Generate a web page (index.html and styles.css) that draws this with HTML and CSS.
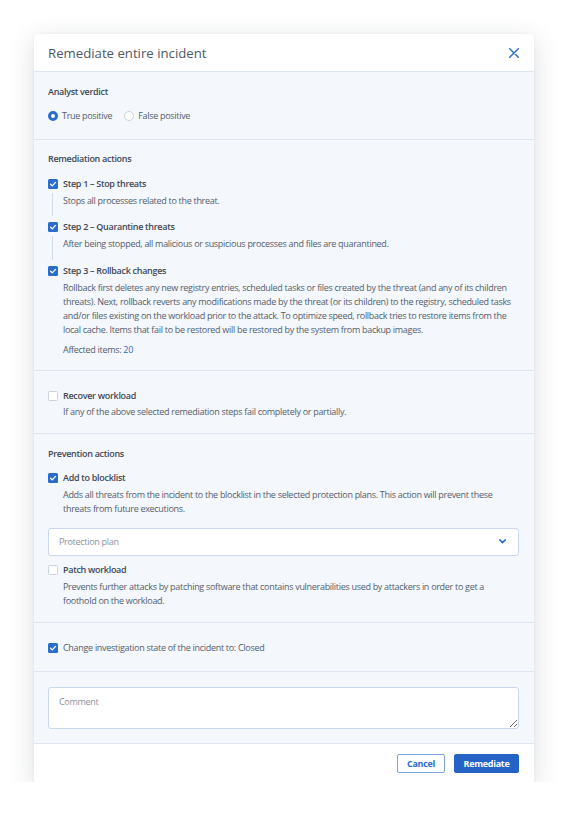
FILE: index.html
```html
<!DOCTYPE html>
<html lang="en">
<head>
<meta charset="utf-8">
<title>Remediate entire incident</title>
<link rel="stylesheet" href="styles.css">
</head>
<body>
<div class="dialog">
  <header class="dlg-head">
    <h1 class="dlg-title">Remediate entire incident</h1>
    <svg class="close" width="10" height="10" viewBox="0 0 10 10"><path d="M0.7 0.7 L9.3 9.3 M9.3 0.7 L0.7 9.3" stroke="#2a6ccb" stroke-width="1.4" fill="none" stroke-linecap="round"/></svg>
  </header>

  <section class="sec sec-verdict">
    <div class="sec-title">Analyst verdict</div>
    <div class="radios">
      <label class="radio"><span class="rdot on"></span><span>True positive</span></label>
      <label class="radio"><span class="rdot"></span><span>False positive</span></label>
    </div>
  </section>

  <section class="sec sec-rem">
    <div class="sec-title">Remediation actions</div>
    <div class="steps">
      <div class="step has-rail">
        <div class="rail">
          <svg class="cb" width="10" height="10" viewBox="0 0 10 10"><rect width="10" height="10" rx="1.5" fill="#2a6ccb"/><path d="M2.6 5.3 L4.3 6.9 L7.5 3.4" stroke="#fff" stroke-width="1.3" fill="none" stroke-linecap="round" stroke-linejoin="round"/></svg>
          <span class="line"></span>
        </div>
        <div class="step-body">
          <div class="lbl">Step 1 – Stop threats</div>
          <p class="desc">Stops all processes related to the threat.</p>
        </div>
      </div>
      <div class="step has-rail">
        <div class="rail">
          <svg class="cb" width="10" height="10" viewBox="0 0 10 10"><rect width="10" height="10" rx="1.5" fill="#2a6ccb"/><path d="M2.6 5.3 L4.3 6.9 L7.5 3.4" stroke="#fff" stroke-width="1.3" fill="none" stroke-linecap="round" stroke-linejoin="round"/></svg>
          <span class="line"></span>
        </div>
        <div class="step-body">
          <div class="lbl">Step 2 – Quarantine threats</div>
          <p class="desc">After being stopped, all malicious or suspicious processes and files are quarantined.</p>
        </div>
      </div>
      <div class="step">
        <div class="rail">
          <svg class="cb" width="10" height="10" viewBox="0 0 10 10"><rect width="10" height="10" rx="1.5" fill="#2a6ccb"/><path d="M2.6 5.3 L4.3 6.9 L7.5 3.4" stroke="#fff" stroke-width="1.3" fill="none" stroke-linecap="round" stroke-linejoin="round"/></svg>
        </div>
        <div class="step-body">
          <div class="lbl">Step 3 – Rollback changes</div>
          <p class="desc">Rollback first deletes any new registry entries, scheduled tasks or files created by the threat (and any of its children threats). Next, rollback reverts any modifications made by the threat (or its children) to the registry, scheduled tasks and/or files existing on the workload prior to the attack. To optimize speed, rollback tries to restore items from the local cache. Items that fail to be restored will be restored by the system from backup images.</p>
          <p class="affected">Affected items: <a class="link">20</a></p>
        </div>
      </div>
    </div>
  </section>

  <section class="sec sec-plain">
    <div class="step">
      <div class="rail"><span class="cb-empty"></span></div>
      <div class="step-body">
        <div class="lbl">Recover workload</div>
        <p class="desc">If any of the above selected remediation steps fail completely or partially.</p>
      </div>
    </div>
  </section>

  <section class="sec sec-prev">
    <div class="sec-title">Prevention actions</div>
    <div class="step step-first">
      <div class="rail">
        <svg class="cb" width="10" height="10" viewBox="0 0 10 10"><rect width="10" height="10" rx="1.5" fill="#2a6ccb"/><path d="M2.6 5.3 L4.3 6.9 L7.5 3.4" stroke="#fff" stroke-width="1.3" fill="none" stroke-linecap="round" stroke-linejoin="round"/></svg>
      </div>
      <div class="step-body">
        <div class="lbl">Add to blocklist</div>
        <p class="desc">Adds all threats from the incident to the blocklist in the selected protection plans. This action will prevent these threats from future executions.</p>
      </div>
    </div>
    <div class="select">
      <span class="placeholder">Protection plan</span>
      <svg class="chev" width="7" height="5" viewBox="0 0 7 5"><path d="M0.8 0.9 L3.5 3.6 L6.2 0.9" stroke="#2a6ccb" stroke-width="1.5" fill="none" stroke-linecap="round" stroke-linejoin="round"/></svg>
    </div>
    <div class="step step-patch">
      <div class="rail"><span class="cb-empty"></span></div>
      <div class="step-body">
        <div class="lbl">Patch workload</div>
        <p class="desc">Prevents further attacks by patching software that contains vulnerabilities used by attackers in order to get a foothold on the workload.</p>
      </div>
    </div>
  </section>

  <section class="sec sec-state">
    <div class="step">
      <div class="rail">
        <svg class="cb" width="10" height="10" viewBox="0 0 10 10"><rect width="10" height="10" rx="1.5" fill="#2a6ccb"/><path d="M2.6 5.3 L4.3 6.9 L7.5 3.4" stroke="#fff" stroke-width="1.3" fill="none" stroke-linecap="round" stroke-linejoin="round"/></svg>
      </div>
      <div class="step-body">
        <div class="plain">Change investigation state of the incident to: Closed</div>
      </div>
    </div>
  </section>

  <section class="sec sec-comment">
    <textarea class="comment" placeholder="Comment"></textarea>
  </section>

  <footer class="dlg-foot">
    <button class="btn btn-sec">Cancel</button>
    <button class="btn btn-pri">Remediate</button>
  </footer>
</div>
</body>
</html>
```

FILE: styles.css
```css
* { box-sizing: border-box; }
html, body { margin: 0; padding: 0; background: #ffffff; }
body {
  font-family: "Open Sans", "Noto Sans", "Liberation Sans", sans-serif;
  font-size: 9px;
  line-height: 14px;
  letter-spacing: -0.3px;
  color: #535e6c;
  padding: 34px 0 0 34px;
}
p { margin: 0; }

.dialog {
  width: 500px;
  background: #f4f7fc;
  box-shadow: 0 6px 26px rgba(40, 50, 70, 0.16), 0 0 3px rgba(40, 50, 70, 0.06);
  border-radius: 2px;
}

.dlg-head {
  height: 38px;
  background: #ffffff;
  border-bottom: 1px solid #dde6f1;
  display: flex;
  align-items: center;
  justify-content: space-between;
  padding: 0 15px 0 14px;
  border-radius: 2px 2px 0 0;
}
.dlg-title {
  margin: 0;
  font-size: 13.2px;
  font-weight: 400;
  letter-spacing: 0;
  color: #4e5866;
  line-height: 18px;
}
.close { display: block; margin-top: 1px; }

.sec {
  padding: 0 15px 0 14px;
  border-bottom: 1px solid #dde6f1;
}
.sec-title {
  font-weight: 600;
  color: #3f4856;
  line-height: 14px;
}

.sec-verdict { padding-top: 13px; padding-bottom: 16px; }
.radios { display: flex; gap: 12px; margin-top: 10px; }
.radio { display: flex; align-items: center; gap: 4px; }
.rdot {
  width: 10px; height: 10px; border-radius: 50%;
  background: #fff; border: 1px solid #c9d3e1;
}
.rdot.on { border: 3px solid #2a6ccb; }

.sec-rem { padding-top: 12px; padding-bottom: 13px; }
.steps { margin-top: 11px; }
.step { display: grid; grid-template-columns: 15px 1fr; }
.has-rail .step-body { padding-bottom: 12px; }
.rail { display: flex; flex-direction: column; padding-top: 2px; }
.cb { display: block; }
.cb-empty {
  display: block; width: 10px; height: 10px;
  background: #fff; border: 1px solid #c9d3e1; border-radius: 1.5px;
}
.line {
  flex: 1;
  width: 1px;
  margin: 4px 0 4px 4px;
  background: #cfdbec;
}
.lbl { font-weight: 600; color: #3f4856; line-height: 14px; }
.desc { margin-top: 3px; line-height: 14.3px; }
.affected { margin-top: 5px; }
.link { color: #2a6ccb; }

.sec-plain { padding-top: 18px; padding-bottom: 14px; }
.sec-plain .desc { margin-top: 2px; }

.sec-prev { padding-top: 13px; padding-bottom: 14px; }
.step-first { margin-top: 10px; }
.select {
  margin-top: 11px;
  height: 28px;
  background: #fff;
  border: 1px solid #c9d8ee;
  border-radius: 3px;
  display: flex;
  align-items: center;
  justify-content: space-between;
  padding: 0 12px 0 10px;
}
.placeholder { color: #8a93a0; }
.chev { display: block; }
.step-patch { margin-top: 7px; }

.sec-state { padding-top: 18px; padding-bottom: 16px; }
.plain { line-height: 14px; }

.sec-comment { padding-top: 15px; padding-bottom: 14px; }
.comment {
  display: block;
  width: 100%;
  height: 42px;
  border: 1px solid #c9d8ee;
  border-radius: 3px;
  background: #fff;
  font-family: inherit;
  font-size: 9px;
  letter-spacing: inherit;
  line-height: 14px;
  padding: 7px 10px;
  color: #535e6c;
  resize: vertical;
  outline: none;
}
.comment::placeholder { color: #8a93a0; }

.dlg-foot {
  height: 38px;
  background: #fff;
  display: flex;
  justify-content: flex-end;
  align-items: center;
  gap: 9px;
  padding: 0 15px 0 14px;
  border-radius: 0 0 2px 2px;
}
.btn {
  height: 19px;
  font-family: inherit;
  font-size: 9px;
  font-weight: 700;
  letter-spacing: inherit;
  border-radius: 2px;
  padding: 0;
  line-height: 17px;
}
.btn-sec {
  width: 48px;
  background: #fff;
  border: 1px solid #7aa3e0;
  color: #2a6ccb;
}
.btn-pri {
  width: 65px;
  background: #2563c6;
  border: 1px solid #2563c6;
  color: #fff;
}
```
